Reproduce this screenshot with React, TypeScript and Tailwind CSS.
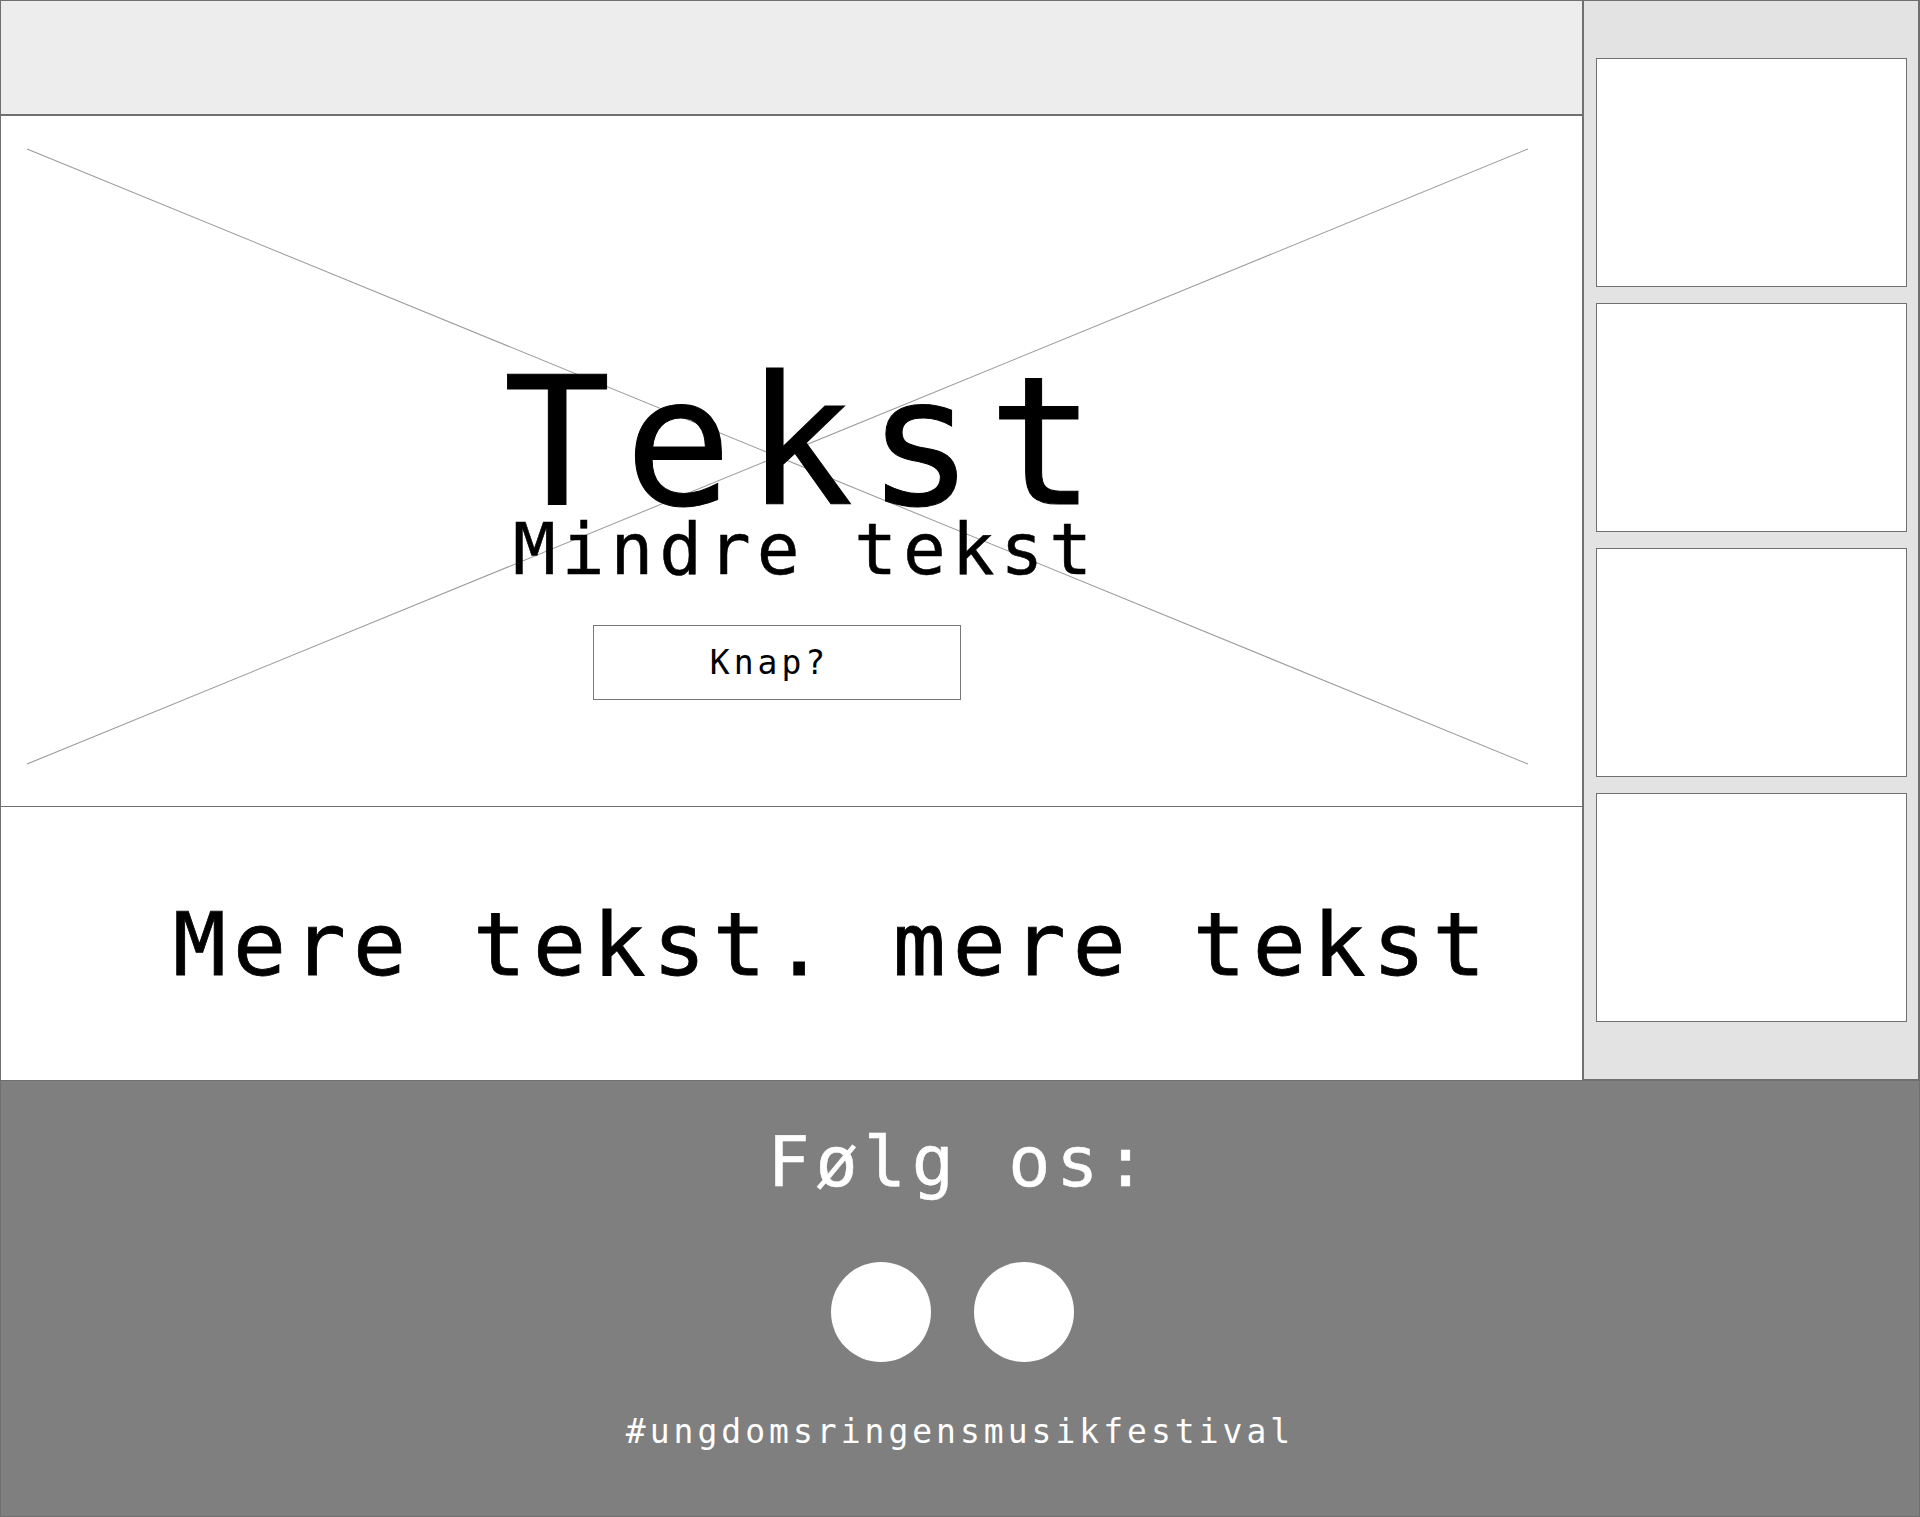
import React from 'react';

const mono = { fontFamily: '"DejaVu Sans Mono", "Liberation Mono", monospace' };

const SideCard: React.FC = () => (
    <div className="w-[311px] h-[229px] bg-white border border-[#707070]" />
);

const Hero: React.FC = () => (
    <div className="relative h-[691px] bg-white border-b border-[#707070]">
        {/* placeholder cross */}
        <svg className="absolute inset-0 w-full h-full" viewBox="0 0 1580 691" preserveAspectRatio="none">
            <line x1="26" y1="33" x2="1526" y2="649" stroke="#999999" strokeWidth="1" />
            <line x1="1526" y1="33" x2="26" y2="649" stroke="#999999" strokeWidth="1" />
        </svg>
        <div className="relative flex flex-col items-center pt-[247px]" style={mono}>
            <div className="text-[178px] leading-[160px] tracking-[14px] text-black pl-[30px] [-webkit-text-stroke:1px_black]">Tekst</div>
            <div className="text-[71px] leading-[54px] tracking-[6px] text-black pl-[28px] [-webkit-text-stroke:0.5px_black]">Mindre tekst</div>
            <button className="mt-[48px] ml-[-30px] w-[368px] h-[75px] border border-[#777777] bg-white flex items-center justify-center">
                <span className="text-[33px] leading-none tracking-[4px] text-black pr-[14px]">Knap?</span>
            </button>
        </div>
    </div>
);

export default function App() {
    return (
        <div className="w-[1920px] h-[1517px] flex flex-col bg-white overflow-hidden">
            <div className="flex h-[1080px]">
                <div className="w-[1582px] flex flex-col border-l border-t border-[#707070]">
                    <div className="h-[115px] bg-[#ededed] border-b-2 border-[#707070]" />
                    <Hero />
                    <div className="flex-1 bg-white pt-[94px] pl-[172px]" style={mono}>
                        <div className="text-[88px] leading-none tracking-[7px] text-black whitespace-pre [-webkit-text-stroke:0.8px_black]">Mere tekst. mere tekst</div>
                    </div>
                </div>
                <div className="w-[338px] bg-[#e3e3e3] border-l-2 border-r-2 border-t border-b border-[#707070] pt-[57px] pl-[12px] flex flex-col gap-[16px]">
                    <SideCard />
                    <SideCard />
                    <SideCard />
                    <SideCard />
                </div>
            </div>
            <footer className="flex-1 bg-[#7f7f7f] border border-[#6f6f6f] flex flex-col items-center pt-[46px]" style={mono}>
                <div className="text-[70px] leading-none tracking-[6px] text-white [-webkit-text-stroke:0.5px_white]">Følg os:</div>
                <div className="mt-[65px] flex gap-[43px] pr-[15px]">
                    <div className="w-[100px] h-[100px] rounded-full bg-white" />
                    <div className="w-[100px] h-[100px] rounded-full bg-white" />
                </div>
                <div className="mt-[53px] text-[33px] leading-none tracking-[4px] text-white">#ungdomsringensmusikfestival</div>
            </footer>
        </div>
    );
}
